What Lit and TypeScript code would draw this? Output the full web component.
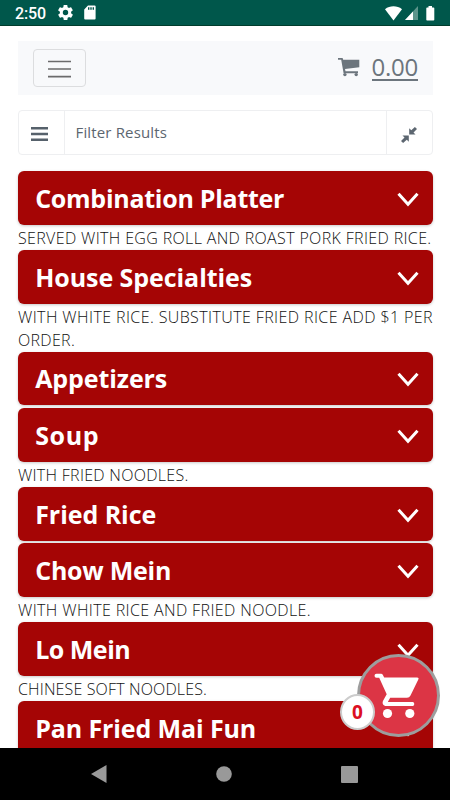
import { LitElement, html, svg, css, nothing } from "lit";
import { customElement, property } from "lit/decorators.js";

interface Line { text: string; width: number; }
interface Section { title: Line; notes: Line[]; }

const sections: Section[] = [
  { title: { text: "Combination Platter", width: 249 }, notes: [{ text: "SERVED WITH EGG ROLL AND ROAST PORK FRIED RICE.", width: 413.5 }] },
  { title: { text: "House Specialties", width: 217 }, notes: [
    { text: "WITH WHITE RICE. SUBSTITUTE FRIED RICE ADD $1 PER", width: 415 },
    { text: "ORDER.", width: 57 },
  ] },
  { title: { text: "Appetizers", width: 132 }, notes: [] },
  { title: { text: "Soup", width: 64 }, notes: [{ text: "WITH FRIED NOODLES.", width: 170.5 }] },
  { title: { text: "Fried Rice", width: 121 }, notes: [] },
  { title: { text: "Chow Mein", width: 136 }, notes: [{ text: "WITH WHITE RICE AND FRIED NOODLE.", width: 293 }] },
  { title: { text: "Lo Mein", width: 95 }, notes: [{ text: "CHINESE SOFT NOODLES.", width: 189 }] },
  { title: { text: "Pan Fried Mai Fun", width: 221 }, notes: [] },
];

/** One line of text tracked so that it fills the given width. */
@customElement("tracked-text")
class TrackedText extends LitElement {
  static styles = css`
    :host { display: inline-block; white-space: nowrap; }
  `;
  @property() text = "";
  @property({ type: Number }) width = 0;

  render() {
    return html`<span>${this.text}</span>`;
  }

  updated() {
    const span = this.renderRoot.querySelector("span")!;
    span.style.letterSpacing = "0";
    const natural = span.getBoundingClientRect().width;
    span.style.letterSpacing = `${(this.width - natural) / this.text.length}px`;
  }
}

const cartPath = svg`<path d="M0 0h4.600l.6 1.800H21.300v7.500L7 11l.5 2.200H20v2H5.600L3.200 1.700H0z"/><circle cx="6.900" cy="16.600" r="1.700"/><circle cx="18.200" cy="16.600" r="1.700"/>`;

@customElement("status-bar")
class StatusBar extends LitElement {
  static styles = css`
    :host {
      display: flex; align-items: center; flex: none; height: 26px; box-sizing: border-box;
      padding: 0 15px; background: #00574b; color: #fff; border-bottom: 1px solid #003c2c;
    }
    .time { font: 500 16px/26px Roboto, sans-serif; width: 43px; padding-top: 2px; }
    svg { display: block; fill: #fff; }
    .gear { margin-right: 11px; }
    .right { margin-left: auto; display: flex; align-items: center; gap: 3px; padding-top: 1px; }
    .battery { margin: 0 0 0 5px; }
    .dim { fill: #5c948b; }
    .slots { fill: #00574b; }
  `;
  render() {
    return html`
      <span class="time"><tracked-text text="2:50" width="31"></tracked-text></span>
      <svg class="gear" width="15" height="15" viewBox="2 2 20 20"><path d="M19.4 13c0-.3.1-.6.1-1s0-.7-.1-1l2.1-1.600c.2-.1.2-.4.1-.6l-2-3.500c-.1-.2-.4-.3-.6-.2l-2.500 1c-.5-.4-1.100-.7-1.700-1l-.4-2.600c0-.3-.2-.5-.4-.5h-4c-.3 0-.5.2-.5.4l-.4 2.700c-.6.2-1.100.6-1.700 1l-2.500-1c-.2-.1-.5 0-.6.2l-2 3.500c-.1.200-.1.400.1.600L4.600 11a8 8 0 0 0 0 2l-2.100 1.600c-.2.1-.2.400-.1.600l2 3.500c.1.200.4.300.6.200l2.500-1c.5.400 1.100.7 1.700 1l.4 2.600c0 .3.2.5.5.5h4c.2 0 .4-.2.4-.4l.4-2.700c.6-.2 1.200-.6 1.700-1l2.500 1c.2.1.5 0 .6-.2l2-3.500c.1-.2.1-.4-.1-.6zM12 15.600a3.600 3.600 0 1 1 0-7.200 3.600 3.600 0 0 1 0 7.200z"/></svg>
      <svg width="12" height="15" viewBox="0 0 12 15"><path d="M4 .5h6.600a1 1 0 0 1 1 1v12a1 1 0 0 1-1 1H1.200a1 1 0 0 1-1-1V4.500z"/><path class="slots" d="M4 2.200h1.400v2.500H4zM6.300 2.200h1.400v2.500H6.300zM8.600 2.200H10v2.500H8.600z"/></svg>
      <div class="right">
        <svg width="17" height="15" viewBox="0 0 17 15"><path d="M0 3.200C5 -.6 12-.6 17 3.200L8.500 14.500z"/></svg>
        <svg width="13" height="14" viewBox="0 0 13 14"><path class="dim" d="M0 14L13 0v14z"/><path d="M0 14L8 5.400V14z"/></svg>
        <svg class="battery" width="9" height="15" viewBox="0 0 9 15"><path d="M2.500 0h3.500v1.500h1.500q.8 0 .8.800v11.500q0 .8-.8.800H1.100q-.8 0-.8-.8V2.300q0-.8.8-.8h1.400z"/></svg>
      </div>`;
  }
}

@customElement("menu-section")
class MenuSection extends LitElement {
  static styles = css`
    :host { display: block; }
    .bar {
      display: flex; align-items: center; justify-content: space-between; box-sizing: border-box;
      height: 53.500px; padding: 0 14px 0 17.200px; border-radius: 6px; background: #a50505; color: #fff;
      font: 700 25px/50px "Open Sans", sans-serif; box-shadow: 0 1px 3px rgba(0, 0, 0, .22);
    }
    .bar tracked-text { margin-top: -.6px; }
    .notes { padding: 2px 0 .7px; margin-bottom: -2.800px; }
    .note { height: 22.900px; font: 350 16px/22.900px "Open Sans", sans-serif; color: #111; white-space: nowrap; }
    svg { display: block; margin-top: 3.500px; }
  `;
  @property({ attribute: false }) section!: Section;
  render() {
    const { title, notes } = this.section;
    return html`
      <div class="bar">
        <tracked-text .text=${title.text} .width=${title.width}></tracked-text>
        <svg width="22" height="16" viewBox="0 0 22 16"><path d="M1.500 1.800L11 12.300L20.500 1.800" fill="none" stroke="#fff" stroke-width="3"/></svg>
      </div>
      ${notes.length
        ? html`<div class="notes">${notes.map((n) => html`<div class="note"><tracked-text .text=${n.text} .width=${n.width}></tracked-text></div>`)}</div>`
        : nothing}`;
  }
}

@customElement("app-root")
class AppRoot extends LitElement {
  static styles = css`
    :host {
      display: flex; flex-direction: column; position: relative; width: 450px; height: 800px; overflow: hidden;
      background: #fff; font-family: "Open Sans", sans-serif;
    }
    svg { display: block; }
    main { flex: 1; min-height: 0; overflow: hidden; padding: 15px 17px 0 18px; }
    .header {
      display: flex; align-items: center; height: 54px; box-sizing: border-box; padding: 0 15px; background: #f8f9fb;
    }
    .toggle {
      display: grid; place-items: center; width: 53px; height: 38px; box-sizing: border-box; padding: 1px 0 0;
      border: 1px solid #dcdddf; border-radius: 4px;
    }
    .cart { display: flex; align-items: center; margin-left: auto; gap: 12px; color: #6c757d; fill: #6c757d; }
    .cart svg { margin-top: -1px; }
    .total { font: 400 24px/28px "Open Sans", sans-serif; border-bottom: 2px solid #6c757d; height: 22px; display: flex; align-items: center; margin-top: 1px; }
    .total tracked-text { margin-top: -2px; }
    .filter {
      display: flex; height: 45px; box-sizing: border-box; margin: 15px 0 16.150px; border: 1px solid #eeeff1; border-radius: 4px;
      color: #495057;
    }
    .cell { display: grid; place-items: center; width: 45px; box-sizing: border-box; }
    .first { width: 46px; border-right: 1px solid #eeeff1; padding: 2px 4px 0 0; }
    .last { width: 46px; border-left: 1px solid #eeeff1; padding: 4px 2px 0 0; }
    .query { flex: 1; padding-left: 10.500px; font: 400 15px/43px "Open Sans", sans-serif; color: #5c6670; }
    .list { display: flex; flex-direction: column; gap: 2.700px; }
    .nav { display: flex; flex: none; height: 52px; box-sizing: border-box; background: #000; align-items: center; padding: 0 92px 0 91px; justify-content: space-between; fill: #999; }
    .fab {
      position: absolute; left: 357px; top: 654px; width: 83px; height: 83px; box-sizing: border-box;
      display: grid; place-items: center; border: 3px solid #9d9d9d; border-radius: 50%; background: #dc3545; fill: #fff;
    }
    .fab svg { margin: 1px 4px 0 0; }
    .count {
      position: absolute; left: 340px; top: 694px; width: 35px; height: 36px; box-sizing: border-box; text-align: center;
      border: 2px solid #ccc; border-radius: 50%; background: #fff; color: #dc0f22; font: 700 19px/33px "Open Sans", sans-serif;
    }
  `;
  render() {
    return html`
      <status-bar></status-bar>
      <main>
        <div class="header">
          <div class="toggle"><svg width="23" height="18" viewBox="0 0 23 18"><path d="M0 1.500h23M0 9h23M0 16.700h23" stroke="#6b6b6c" stroke-width="1.700"/></svg></div>
          <div class="cart">
            <svg width="22" height="19" viewBox="0 0 22 19">${cartPath}</svg>
            <div class="total"><tracked-text text="0.00" width="46.500"></tracked-text></div>
          </div>
        </div>
        <div class="filter">
          <div class="cell first"><svg width="17" height="14" viewBox="0 0 17 14"><path d="M0 1.300h17M0 7h17M0 12.700h17" stroke="#56616b" stroke-width="2.500"/></svg></div>
          <div class="query"><tracked-text text="Filter Results" width="91.500"></tracked-text></div>
          <div class="cell last"><svg width="16" height="16" viewBox="0 0 16 16" fill="#5c6670"><path d="M8.200 7.500V1.300l2.100 2L13.900 0l2.100 2-3.500 3.500 2 2zM7.800 8.500v6.200l-2-2L2.100 16 0 14l3.500-3.500-2-2z"/></svg></div>
        </div>
        <div class="list">${sections.map((s) => html`<menu-section .section=${s}></menu-section>`)}</div>
      </main>
      <nav class="nav">
        <svg width="16" height="18" viewBox="0 0 16 18"><path d="M0 9L15.500 0v18z"/></svg>
        <svg width="16" height="16" viewBox="0 0 16 16"><circle cx="8" cy="8" r="7.800"/></svg>
        <svg width="17" height="17" viewBox="0 0 17 17"><rect width="17" height="17" rx="1"/></svg>
      </nav>
      <div class="fab">
        <svg width="46" height="46" viewBox="0 0 46 46"><path d="M2.500 .8h4.500q1.400 0 2 1.400L10.200 4.600h33q2 0 1.100 1.900L36.500 22.500q-1.100 2.300-3.500 2.300H16.200l-2.400 4.100H38.600q1.700 0 1.700 2.100t-1.700 2.100H12.500c-3.500 0-4.700-3-3.300-5.600l3.500-6.200L5.200 4.800H2.500Q.5 4.800.5 2.800T2.500 .8z"/><circle cx="13.500" cy="40.500" r="4.600"/><circle cx="35.800" cy="40.500" r="4.600"/></svg>
      </div>
      <div class="count">0</div>`;
  }
}
